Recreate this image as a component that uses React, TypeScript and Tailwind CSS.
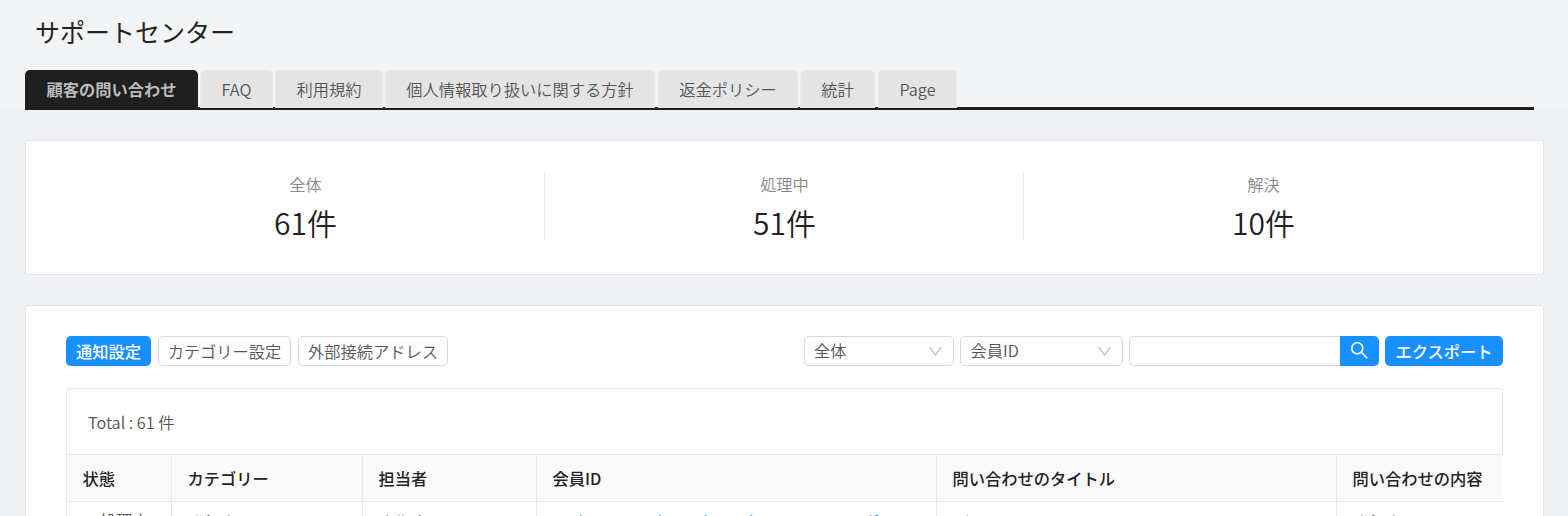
import React from "react";

const tabs = [
  { label: "FAQ", w: "w-[73px]", gap: "mr-[2px]" },
  { label: "利用規約", w: "w-[108px]", gap: "mr-[2px]" },
  { label: "個人情報取り扱いに関する方針", w: "w-[270px]", gap: "mr-[3px]" },
  { label: "返金ポリシー", w: "w-[140px]", gap: "mr-[2px]" },
  { label: "統計", w: "w-[75px]", gap: "mr-[3px]" },
  { label: "Page", w: "w-[79px]", gap: "" },
];

const stats = [
  { label: "全体", value: "61件", cls: "w-[479px] border-r pl-px" },
  { label: "処理中", value: "51件", cls: "w-[479px] border-r pl-px" },
  { label: "解決", value: "10件", cls: "w-[479px]" },
];

const columns = [
  { head: "状態", w: "w-[105px]", cell: "処理中", cellCls: "pl-[33px] leading-[36px]" },
  { head: "カテゴリー", w: "w-[191px]", cell: "登録中", cellCls: "pl-4 leading-[40px]" },
  { head: "担当者", w: "w-[174px]", cell: "未指定", cellCls: "pl-4 leading-[40px]" },
  { head: "会員ID", w: "w-[400px]", cell: "saehonsumushoneshonurhonsumecomesif", cellCls: "pl-4 leading-[38px] text-[#1890ff]" },
  { head: "問い合わせのタイトル", w: "w-[400px]", cell: "が", cellCls: "pl-4 leading-[40px]" },
  { head: "問い合わせの内容", w: "w-[166px]", cell: "登録中", cellCls: "pl-4 leading-[40px]" },
];

function Chevron() {
  return (
    <svg className="h-[15px] w-[15px] text-[#bfbfbf]" viewBox="64 64 896 896" fill="currentColor">
      <path d="M884 256h-75c-5.100 0-9.900 2.500-12.900 6.600L512 654.200 227.900 262.600c-3-4.100-7.800-6.600-12.900-6.600h-75c-6.500 0-10.300 7.400-6.500 12.700l352.600 486.100c12.800 17.600 39 17.600 51.700 0l352.600-486.100c3.900-5.300.1-12.700-6.400-12.700z" />
    </svg>
  );
}

function SearchIcon() {
  return (
    <svg className="mb-[2px] h-[18.750px] w-[18.750px]" viewBox="64 64 896 896" fill="currentColor">
      <path d="M909.600 854.500L649.900 594.800C690.200 542.700 712 479 712 412c0-80.200-31.300-155.400-87.900-212.100-56.600-56.700-132-87.900-212.100-87.900s-155.500 31.300-212.100 87.900C143.200 256.500 112 331.800 112 412c0 80.100 31.300 155.500 87.900 212.100C256.500 680.800 331.800 712 412 712c67 0 130.600-21.800 182.700-62l259.700 259.600a8.200 8.200 0 0 0 11.600 0l43.600-43.500a8.200 8.200 0 0 0 0-11.600zM570.400 570.400C528 612.700 471.800 636 412 636s-116-23.300-158.400-65.600C211.300 528 188 471.800 188 412s23.300-116.100 65.600-158.400C296 211.300 352.200 188 412 188s116.100 23.200 158.400 65.600S636 352.200 636 412s-23.300 116.100-65.600 158.400z" />
    </svg>
  );
}

export default function App() {
  return (
    <div className="flex h-[516px] w-[1568px] flex-col overflow-hidden bg-[#f0f1f5] font-['Noto_Sans_CJK_JP',sans-serif] text-[16.25px] font-[350] text-[#555]">
      <header className="flex h-[110px] shrink-0 flex-col bg-[#f3f4f6] pl-[25px]">
        <h1 className="h-[70px] pl-[10px] text-[25px] font-normal leading-[63px] text-[#222]">サポートセンター</h1>
        <nav className="flex h-10 w-[1509px] bg-[linear-gradient(#1f1f1f,#1f1f1f)] bg-[length:100%_3px] bg-bottom bg-no-repeat">
          <div className="mr-[2px] h-10 w-[173px] rounded-t-[5px] bg-[#1f1f1f] text-center font-bold leading-[39px] text-[#bbb]">
            顧客の問い合わせ
          </div>
          {tabs.map((t) => (
            <div key={t.label} className={`h-[38px] rounded-t-[5px] border border-b-0 border-[#e9e9e9] bg-[#e4e4e4] text-center leading-[37px] ${t.w} ${t.gap}`}>
              {t.label}
            </div>
          ))}
        </nav>
      </header>

      <section className="mt-[30px] ml-[25px] flex h-[135px] w-[1519px] shrink-0 border border-[#e6e6e6] bg-white pt-[30px] pl-[40px]">
        {stats.map((s) => (
          <div key={s.label} className={`flex h-[70px] flex-col items-center border-[#e8e8e8] ${s.cls}`}>
            <span className="h-[29px] leading-[27px] text-[#888]">{s.label}</span>
            <span className="text-[30px] leading-[49px] text-[#222]">{s.value}</span>
          </div>
        ))}
      </section>

      <section className="mt-[30px] ml-[25px] h-[240px] w-[1519px] shrink-0 border border-[#e6e6e6] bg-white px-[40px] pt-[30px]">
        <div className="flex h-[30px] justify-between leading-[28px]">
          <div className="flex gap-[7px]">
            <button className="w-[85px] rounded-[5px] bg-[#1890ff] font-medium leading-[30px] text-white shadow-[0_2px_0_rgba(0,0,0,0.04)]">通知設定</button>
            <button className="w-[133px] rounded-[5px] border border-[#d9d9d9] shadow-[0_2px_0_rgba(0,0,0,0.02)]">カテゴリー設定</button>
            <button className="w-[150px] rounded-[5px] border border-[#d9d9d9] shadow-[0_2px_0_rgba(0,0,0,0.02)]">外部接続アドレス</button>
          </div>
          <div className="flex">
            <div className="mr-[6px] flex w-[150px] items-center justify-between rounded-[5px] border border-[#d9d9d9] pr-[10px] pl-[9px]">
              <span className="h-7 leading-[26px]">全体</span>
              <Chevron />
            </div>
            <div className="mr-[6px] flex w-[163px] items-center justify-between rounded-[5px] border border-[#d9d9d9] pr-[10px] pl-[9.500px]">
              <span className="h-7 leading-[26px]">会員ID</span>
              <Chevron />
            </div>
            <input className="w-[211px] rounded-l-[5px] border border-r-0 border-[#d9d9d9] outline-none" />
            <button className="mr-[6px] flex w-[39px] items-center justify-center rounded-r-[5px] bg-[#1890ff] text-white shadow-[0_2px_0_rgba(0,0,0,0.04)]">
              <SearchIcon />
            </button>
            <button className="w-[118px] rounded-[5px] bg-[#1890ff] font-medium leading-[30px] text-white shadow-[0_2px_0_rgba(0,0,0,0.04)]">エクスポート</button>
          </div>
        </div>

        <div className="mt-[22px] h-[66px] rounded-t-[5px] border border-b-0 border-[#e8e8e8] pl-[21px] leading-[66px]">Total : 61 件</div>
        <div className="flex h-12 border-y border-l border-[#e8e8e8] bg-[#fafafa] font-medium leading-[47px] text-[#222]">
          {columns.map((c) => (
            <div key={c.head} className={`border-r border-[#e8e8e8] pl-[15.500px] last:border-r-0 ${c.w}`}>{c.head}</div>
          ))}
        </div>
        <div className="flex h-12 border-l border-[#e8e8e8]">
          {columns.map((c) => (
            <div key={c.head} className={`border-r border-[#e8e8e8] last:border-r-0 ${c.w} ${c.cellCls}`}>{c.cell}</div>
          ))}
        </div>
      </section>
    </div>
  );
}
